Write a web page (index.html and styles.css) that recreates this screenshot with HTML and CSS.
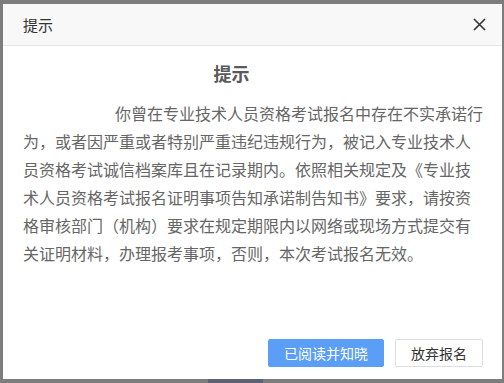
FILE: index.html
```html
<!DOCTYPE html>
<html lang="zh-CN">
<head>
    <meta charset="UTF-8">
    <meta name="viewport" content="width=device-width, initial-scale=1.0">
    <title>提示</title>
    <link rel="stylesheet" href="styles.css">
</head>
<body>
    <div class="dialog">
        <div class="dialog-header">
            <span class="dialog-title">提示</span>
            <button class="dialog-close" aria-label="关闭">
                <svg width="13" height="13" viewBox="0 0 13 13">
                    <path d="M1 1L12 12M12 1L1 12" stroke="#333" stroke-width="1.6" fill="none"/>
                </svg>
            </button>
        </div>
        <div class="dialog-body">
            <h3>提示</h3>
            <p>你曾在专业技术人员资格考试报名中存在不实承诺行为，或者因严重或者特别严重违纪违规行为，被记入专业技术人员资格考试诚信档案库且在记录期内。依照相关规定及《专业技术人员资格考试报名证明事项告知承诺制告知书》要求，请按资格审核部门（机构）要求在规定期限内以网络或现场方式提交有关证明材料，办理报考事项，否则，本次考试报名无效。</p>
        </div>
        <div class="dialog-footer">
            <button class="btn btn-primary">已阅读并知晓</button>
            <button class="btn">放弃报名</button>
        </div>
    </div>
    <div class="behind"></div>
</body>
</html>
```
FILE: styles.css
```css
html, body {
    margin: 0;
    padding: 0;
    height: 100%;
    overflow: hidden;
}
body {
    background-color: #7d7d7d;
    font-family: "Noto Sans CJK SC", "Noto Sans", sans-serif;
    padding: 4px 2px 0 3px;
    box-sizing: border-box;
}
.dialog {
    background: white;
    width: 499px;
    height: 375px;
    display: flex;
    flex-direction: column;
}
.dialog-header {
    height: 41px;
    background-color: #f8f8f8;
    border-bottom: 1px solid #e6e6e6;
    display: flex;
    align-items: center;
    justify-content: space-between;
    padding: 0 16px 0 20px;
}
.dialog-title {
    font-size: 15px;
    color: #333;
}
.dialog-close {
    border: none;
    background: none;
    padding: 0;
    display: flex;
    cursor: pointer;
}
.dialog-body {
    flex: 1;
    padding: 14px 18px 0 20px;
    color: #666;
}
.dialog-body h3 {
    margin: 0;
    padding-right: 44px;
    text-align: center;
    font-size: 18px;
    font-weight: bold;
    line-height: 26px;
    color: #5a5a5a;
}
.dialog-body p {
    margin: 13px 0 0 0;
    width: 460px;
    font-size: 16px;
    line-height: 28px;
    text-indent: 92px;
}
.dialog-footer {
    display: flex;
    justify-content: flex-end;
    gap: 11px;
    padding: 0 19px 12px 0;
}
.btn {
    height: 28px;
    padding: 0 15px;
    border: 1px solid #dedede;
    border-radius: 2px;
    background: white;
    color: #333;
    font-family: inherit;
    font-size: 14px;
    white-space: nowrap;
    cursor: pointer;
}
.btn-primary {
    background-color: #5a9ef6;
    border-color: #5a9ef6;
    color: white;
}
.behind {
    margin-left: 205px;
    width: 55px;
    height: 4px;
    background-color: #5e6273;
}
```
